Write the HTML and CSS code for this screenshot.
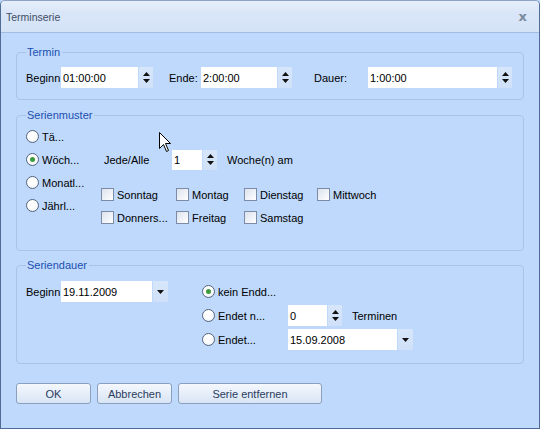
FILE: index.html
```html
<!DOCTYPE html>
<html lang="de">
<head>
<meta charset="utf-8">
<title>Terminserie</title>
<link rel="stylesheet" href="styles.css">
</head>
<body>
<div class="window">
  <div class="titlebar">
    <span class="title">Terminserie</span>
    <span class="close">x</span>
  </div>
  <div class="content">
    <fieldset class="group g-termin">
      <legend>Termin</legend>
      <div class="row">
        <span class="lbl w35">Beginn</span>
        <div class="spin w92"><span class="field">01:00:00</span><span class="spinbtn"><svg viewBox="0 0 7 11" width="7" height="11"><polygon points="3.5,0 7,4 0,4"/><polygon points="0,7 7,7 3.5,11"/></svg></span></div>
        <span class="lbl w32 ml16">Ende:</span>
        <div class="spin w91"><span class="field">2:00:00</span><span class="spinbtn"><svg viewBox="0 0 7 11" width="7" height="11"><polygon points="3.5,0 7,4 0,4"/><polygon points="0,7 7,7 3.5,11"/></svg></span></div>
        <span class="lbl w54 ml22">Dauer:</span>
        <div class="spin w144"><span class="field">1:00:00</span><span class="spinbtn"><svg viewBox="0 0 7 11" width="7" height="11"><polygon points="3.5,0 7,4 0,4"/><polygon points="0,7 7,7 3.5,11"/></svg></span></div>
      </div>
    </fieldset>

    <fieldset class="group g-muster">
      <legend>Serienmuster</legend>
      <div class="muster">
        <div class="radios">
          <div class="ritem"><span class="radio"></span><span>Tä...</span></div>
          <div class="ritem"><span class="radio on"></span><span>Wöch...</span></div>
          <div class="ritem"><span class="radio"></span><span>Monatl...</span></div>
          <div class="ritem"><span class="radio"></span><span>Jährl...</span></div>
        </div>
        <div class="weekly">
          <div class="spacer"></div>
          <div class="jede">
            <span class="lbl w68 ml3">Jede/Alle</span>
            <div class="spin w45 h20"><span class="field">1</span><span class="spinbtn"><svg viewBox="0 0 7 11" width="7" height="11"><polygon points="3.5,0 7,4 0,4"/><polygon points="0,7 7,7 3.5,11"/></svg></span></div>
            <span class="lbl ml10">Woche(n) am</span>
          </div>
          <div class="days">
            <div class="citem"><span class="check"></span><span>Sonntag</span></div>
            <div class="citem"><span class="check"></span><span>Montag</span></div>
            <div class="citem"><span class="check"></span><span>Dienstag</span></div>
            <div class="citem"><span class="check"></span><span>Mittwoch</span></div>
            <div class="citem"><span class="check"></span><span>Donners...</span></div>
            <div class="citem"><span class="check"></span><span>Freitag</span></div>
            <div class="citem"><span class="check"></span><span>Samstag</span></div>
          </div>
        </div>
      </div>
    </fieldset>

    <fieldset class="group g-dauer">
      <legend>Seriendauer</legend>
      <div class="dauer">
        <div class="drow">
          <span class="lbl w35">Beginn</span>
          <div class="combo w107"><span class="field">19.11.2009</span><span class="dropbtn"><svg viewBox="0 0 7 4" width="7" height="4"><polygon points="0,0 7,0 3.5,4"/></svg></span></div>
        </div>
        <div class="ends">
          <div class="erow"><div class="ritem w86"><span class="radio on"></span><span>kein Endd...</span></div></div>
          <div class="erow"><div class="ritem w86"><span class="radio"></span><span>Endet n...</span></div>
            <div class="spin w54"><span class="field">0</span><span class="spinbtn"><svg viewBox="0 0 7 11" width="7" height="11"><polygon points="3.5,0 7,4 0,4"/><polygon points="0,7 7,7 3.5,11"/></svg></span></div>
            <span class="lbl ml10">Terminen</span>
          </div>
          <div class="erow"><div class="ritem w86"><span class="radio"></span><span>Endet...</span></div>
            <div class="combo w125"><span class="field">15.09.2008</span><span class="dropbtn"><svg viewBox="0 0 7 4" width="7" height="4"><polygon points="0,0 7,0 3.5,4"/></svg></span></div>
          </div>
        </div>
      </div>
    </fieldset>

    <div class="buttons">
      <button class="btn b75">OK</button>
      <button class="btn b75">Abbrechen</button>
      <button class="btn b144">Serie entfernen</button>
    </div>
  </div>
  <svg class="cursor" viewBox="0 0 13 21" width="13" height="21"><path d="M0.5,0.5 L0.5,16.5 L4.5,12.5 L7.5,19.5 L9.5,18.5 L6.5,11.5 L11.5,11.5 Z" fill="#fff" stroke="#000" stroke-width="1"/></svg>
</div>
</body>
</html>
```

FILE: styles.css
```css
html, body {
  margin: 0;
  padding: 0;
  background: #bfd8fb;
}
.window {
  position: relative;
  box-sizing: border-box;
  width: 540px;
  height: 429px;
  border: 1px solid #4f6c96;
  border-top-color: #8ea4c4;
  border-radius: 5px 5px 0 0;
  background: #bfd9fc;
  font-family: "Liberation Sans", Arial, sans-serif;
  font-size: 11px;
  color: #000;
  overflow: hidden;
}
.titlebar {
  height: 31px;
  display: flex;
  align-items: center;
  justify-content: space-between;
  padding: 0 12px 0 5px;
  background: linear-gradient(#e6eefa, #d9e6f8 40%, #d5e3f7);
  border-bottom: 1px solid #a3bde2;
}
.title {
  font-size: 10.5px;
  color: #3f4d66;
  padding-top: 1px;
}
.close {
  font-size: 13px;
  color: #6a7a90;
  font-family: "DejaVu Sans", sans-serif;
  font-weight: bold;
  opacity: 0.85;
}
.content {
  padding: 12px 15px 0 15px;
}
.group {
  margin: 0;
  border: 1px solid #a9c3e7;
  border-radius: 4px;
  padding: 0 8px 0 9px;
  min-width: 0;
}
.group legend {
  color: #1a4fb0;
  padding: 0 2px 0 1px;
  line-height: 14px;
}
.g-termin { padding-top: 8px; padding-bottom: 11px; }
.g-muster { margin-top: 8px; padding-top: 3px; padding-bottom: 21px; }
.g-dauer { margin-top: 7px; padding-top: 9px; padding-bottom: 13px; }

.row, .jede, .drow, .erow {
  display: flex;
  align-items: center;
  height: 21px;
}
.lbl { white-space: nowrap; flex: none; }
.w35 { width: 35px; }
.w32 { width: 32px; }
.w54 { width: 54px; }
.w68 { width: 68px; }
.w86 { width: 86px; }
.ml3 { margin-left: 3px; }
.ml10 { margin-left: 10px; }
.ml16 { margin-left: 16px; }
.ml22 { margin-left: 22px; }

.spin, .combo {
  display: flex;
  height: 21px;
  flex: none;
}
.h20 { height: 20px; }
.w92 { width: 92px; }
.w91 { width: 91px; }
.w144 { width: 144px; }
.w45 { width: 45px; }
.w107 { width: 107px; }
.w125 { width: 125px; }
.field {
  flex: 1;
  background: #fff;
  padding-left: 2px;
  display: flex;
  align-items: center;
}
.spinbtn, .dropbtn {
  width: 14px;
  display: flex;
  align-items: center;
  justify-content: center;
  background: linear-gradient(#d7e6fa, #cfe0f8);
  margin-left: 1px;
}
.dropbtn { width: 15px; }
.spinbtn svg, .dropbtn svg { fill: #111; }

.muster { display: flex; }
.radios { width: 75px; flex: none; }
.ritem {
  display: flex;
  align-items: center;
  height: 23px;
  white-space: nowrap;
}
.erow .ritem { height: 21px; }
.radio {
  box-sizing: border-box;
  width: 13px;
  height: 13px;
  border: 1px solid #55657e;
  border-radius: 50%;
  background: radial-gradient(circle at 40% 35%, #fff 40%, #e4e8ee);
  margin-right: 3px;
  position: relative;
  flex: none;
}
.radio.on::after {
  content: "";
  position: absolute;
  left: 3px;
  top: 3px;
  width: 5px;
  height: 5px;
  border-radius: 50%;
  background: #3d9a3d;
}
.weekly { flex: 1; }
.spacer { height: 23px; }
.jede { height: 23px; }
.days {
  margin-top: 12px;
  display: grid;
  grid-template-columns: 75px 68px 73px auto;
  grid-auto-rows: 23px;
}
.citem {
  display: flex;
  align-items: center;
  white-space: nowrap;
}
.check {
  box-sizing: border-box;
  width: 13px;
  height: 13px;
  border: 1px solid #7d8ca6;
  background: linear-gradient(135deg, #dce3ee, #f4f6fa 70%, #fff);
  margin-right: 3px;
  flex: none;
}

.dauer { display: flex; }
.drow { align-self: flex-start; }
.ends {
  margin-left: 34px;
  display: flex;
  flex-direction: column;
  gap: 3px;
}

.buttons {
  margin-top: 19px;
  display: flex;
  gap: 6px;
}
.btn {
  height: 21px;
  border: 1px solid #8aa0be;
  border-radius: 3px;
  background: linear-gradient(#f5f8fd, #e6eef9 50%, #d9e5f5);
  font-family: "Liberation Sans", Arial, sans-serif;
  font-size: 11px;
  color: #2a3d5e;
  padding: 0;
}
.b75 { width: 75px; }
.b144 { width: 144px; }

.cursor {
  position: absolute;
  left: 158px;
  top: 131px;
}
```
